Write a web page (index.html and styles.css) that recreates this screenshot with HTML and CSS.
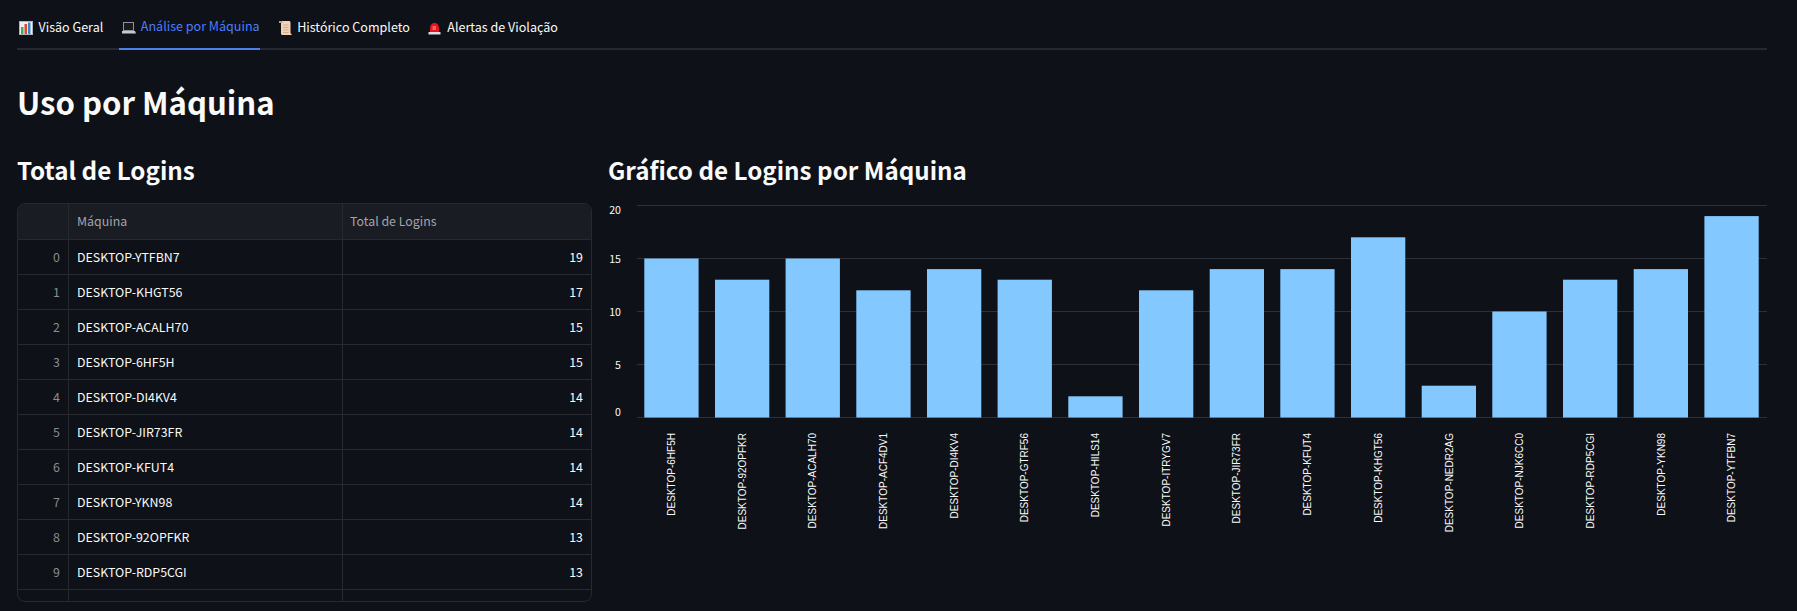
FILE: index.html
```html
<!DOCTYPE html>
<html lang="pt">
<head>
<meta charset="utf-8">
<title>Uso por Máquina</title>
<link rel="stylesheet" href="styles.css">
</head>
<body>
<main class="page">
  <nav class="tabs">
    <a class="tab"><svg class="ico" viewBox="0 0 17 17"><rect x="2" y="2" width="14" height="14" fill="#eef1f4"/><rect x="2.500" y="2.500" width="13" height="13" fill="none" stroke="#aab2ba"/><rect x="4" y="8" width="2.500" height="7" fill="#3fb060"/><rect x="7.500" y="5" width="2.500" height="10" fill="#e0492f"/><rect x="11" y="3.500" width="2.500" height="11.500" fill="#3b88c3"/></svg>Visão Geral</a>
    <a class="tab active"><svg class="ico" viewBox="0 0 17 17"><rect x="4.500" y="4.500" width="10" height="8" fill="#17191d" stroke="#8d9399"/><path d="M3 13h13l1 2.500H3z" fill="#c6cace"/></svg>Análise por Máquina</a>
    <a class="tab"><svg class="ico" viewBox="0 0 17 17"><path d="M3 2h10c1 0 1.500 .6 1.500 1.500V14l1.500 2H6.500C5.500 16 5 15.400 5 14.500V3.800H3z" fill="#f3d2b8"/><path d="M3 2h3l.5 2H3z" fill="#c99a7c"/><path d="M7 6h5.500M7 8.500h5.500M7 11h5.500M7 13.500h5.500" stroke="#d3ab90"/></svg>Histórico Completo</a>
    <a class="tab"><svg class="ico" viewBox="0 0 17 17"><path d="M4 13V9.500C4 6 6 4 8.500 4S13 6 13 9.500V13z" fill="#e8141f"/><path d="M6.500 7h3.500v4H6.500z" fill="#ff5c5c"/><path d="M2.500 13h12v2.500h-12z" fill="#dcdde0"/></svg>Alertas de Violação</a>
  </nav>
  <h1 class="title">Uso por Máquina</h1>
  <div class="columns">
    <section class="col-table">
      <h2 class="subtitle">Total de Logins</h2>
      <div class="frame">
        <div class="row head"><div class="c idx"></div><div class="c name">Máquina</div><div class="c total">Total de Logins</div></div>
        <div class="row"><div class="c idx">0</div><div class="c name">DESKTOP-YTFBN7</div><div class="c total num">19</div></div>
        <div class="row"><div class="c idx">1</div><div class="c name">DESKTOP-KHGT56</div><div class="c total num">17</div></div>
        <div class="row"><div class="c idx">2</div><div class="c name">DESKTOP-ACALH70</div><div class="c total num">15</div></div>
        <div class="row"><div class="c idx">3</div><div class="c name">DESKTOP-6HF5H</div><div class="c total num">15</div></div>
        <div class="row"><div class="c idx">4</div><div class="c name">DESKTOP-DI4KV4</div><div class="c total num">14</div></div>
        <div class="row"><div class="c idx">5</div><div class="c name">DESKTOP-JIR73FR</div><div class="c total num">14</div></div>
        <div class="row"><div class="c idx">6</div><div class="c name">DESKTOP-KFUT4</div><div class="c total num">14</div></div>
        <div class="row"><div class="c idx">7</div><div class="c name">DESKTOP-YKN98</div><div class="c total num">14</div></div>
        <div class="row"><div class="c idx">8</div><div class="c name">DESKTOP-92OPFKR</div><div class="c total num">13</div></div>
        <div class="row"><div class="c idx">9</div><div class="c name">DESKTOP-RDP5CGI</div><div class="c total num">13</div></div>
        <div class="row tail"><div class="c idx"></div><div class="c name"></div><div class="c total"></div></div>
      </div>
    </section>
    <section class="col-chart">
      <h2 class="subtitle">Gráfico de Logins por Máquina</h2>
      <svg class="chart" width="1147" height="360" viewBox="620 190 1147 360">
        <g class="grid">
          <path d="M637 205.500H1767M637 258.500H1767M637 311.500H1767M637 364.500H1767M637 417.500H1767"/>
        </g>
        <g class="ylabels">
          <text x="621" y="214">20</text><text x="621" y="263">15</text><text x="621" y="316">10</text><text x="621" y="369">5</text><text x="621" y="416">0</text>
        </g>
        <g class="bars">
          <rect x="644.3" y="258.500" width="54.300" height="159"/>
          <rect x="715" y="279.700" width="54.300" height="137.800"/>
          <rect x="785.600" y="258.500" width="54.300" height="159"/>
          <rect x="856.300" y="290.300" width="54.300" height="127.200"/>
          <rect x="927" y="269.100" width="54.300" height="148.400"/>
          <rect x="997.600" y="279.700" width="54.300" height="137.800"/>
          <rect x="1068.300" y="396.300" width="54.300" height="21.200"/>
          <rect x="1139" y="290.300" width="54.300" height="127.200"/>
          <rect x="1209.700" y="269.100" width="54.300" height="148.400"/>
          <rect x="1280.300" y="269.100" width="54.300" height="148.400"/>
          <rect x="1351" y="237.300" width="54.300" height="180.200"/>
          <rect x="1421.700" y="385.700" width="54.300" height="31.800"/>
          <rect x="1492.300" y="311.500" width="54.300" height="106"/>
          <rect x="1563" y="279.700" width="54.300" height="137.800"/>
          <rect x="1633.700" y="269.100" width="54.300" height="148.400"/>
          <rect x="1704.400" y="216.100" width="54.300" height="201.400"/>
        </g>
        <g class="xlabels">
          <text transform="translate(675 433) rotate(-90)">DESKTOP-6HF5H</text>
          <text transform="translate(746 433) rotate(-90)">DESKTOP-92OPFKR</text>
          <text transform="translate(816 433) rotate(-90)">DESKTOP-ACALH70</text>
          <text transform="translate(887 433) rotate(-90)">DESKTOP-ACF4DV1</text>
          <text transform="translate(958 433) rotate(-90)">DESKTOP-DI4KV4</text>
          <text transform="translate(1028 433) rotate(-90)">DESKTOP-GTRF56</text>
          <text transform="translate(1099 433) rotate(-90)">DESKTOP-HILS14</text>
          <text transform="translate(1170 433) rotate(-90)">DESKTOP-ITRYGV7</text>
          <text transform="translate(1240 433) rotate(-90)">DESKTOP-JIR73FR</text>
          <text transform="translate(1311 433) rotate(-90)">DESKTOP-KFUT4</text>
          <text transform="translate(1382 433) rotate(-90)">DESKTOP-KHGT56</text>
          <text transform="translate(1453 433) rotate(-90)">DESKTOP-NEDR2AG</text>
          <text transform="translate(1523 433) rotate(-90)">DESKTOP-NJK6CC0</text>
          <text transform="translate(1594 433) rotate(-90)">DESKTOP-RDP5CGI</text>
          <text transform="translate(1665 433) rotate(-90)">DESKTOP-YKN98</text>
          <text transform="translate(1735 433) rotate(-90)">DESKTOP-YTFBN7</text>
        </g>
      </svg>
    </section>
  </div>
</main>
</body>
</html>
```

FILE: styles.css
```css
* { box-sizing: border-box; }
html, body { margin: 0; height: 100%; background: #0e1117; overflow: hidden; }
body { color: #fafafa; font-family: "Noto Sans CJK SC", "Noto Sans", sans-serif; }
.page { padding: 0 30px 0 17px; }

.tabs { display: flex; gap: 16px; height: 50px; border-bottom: 2px solid #262730; }
.tab { display: flex; align-items: center; gap: 4.5px; height: 50px; padding: 4px 0 0; font-size: 12.55px; line-height: 20px; color: #fafafa; white-space: nowrap; }
.tab.active { color: #4a7dff; border-bottom: 2px solid #4d7fe6; }
.ico { width: 17px; height: 17px; flex: none; }

.title { margin: 29px 0 0; font-size: 31.1px; line-height: 46px; font-weight: 700; }
.columns { display: flex; gap: 16px; margin-top: 27px; }
.col-table { width: 575px; flex: none; }
.col-chart { flex: 1; min-width: 0; }
.subtitle { margin: 0; font-size: 24.2px; line-height: 36px; font-weight: 700; }

.frame { margin-top: 15px; height: 399px; border: 1px solid #262a2f; border-radius: 8px; overflow: hidden; }
.row { display: grid; grid-template-columns: 51px 274px 1fr; height: 35px; border-bottom: 1px solid #262a2f; font-size: 12.4px; line-height: 35px; }
.row.head { height: 36px; background: #1a1c24; color: #a3a4a8; }
.row.tail { height: 12px; border-bottom: 0; }
.c { padding: 0 8px; border-right: 1px solid #262a2f; white-space: nowrap; }
.c:last-child { border-right: 0; }
.head .total { padding-left: 7px; }
.idx { text-align: right; color: #8b8c90; }
.num { text-align: right; }

.chart { display: block; overflow: visible; margin: 2px 0 0 12px; }
.grid path { stroke: #2e3038; stroke-width: 1; fill: none; }
.bars rect { fill: #83c9ff; }
.ylabels text { font-family: "Noto Sans CJK SC", sans-serif; font-size: 10.6px; fill: #fafafa; text-anchor: end; }
.xlabels text { font-family: "Liberation Sans", sans-serif; font-size: 10px; fill: #fafafa; text-anchor: end; }
```
